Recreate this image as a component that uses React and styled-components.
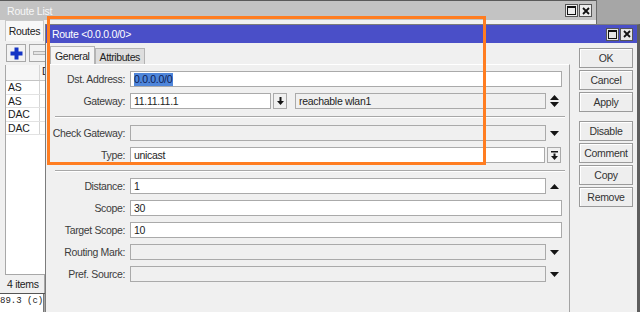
import React from 'react';
import styled, { createGlobalStyle } from 'styled-components';

const GlobalStyle = createGlobalStyle`
  html, body {
    margin: 0;
    padding: 0;
  }
  body {
    font-family: "Liberation Sans", Arial, sans-serif;
    font-size: 10px;
    letter-spacing: -0.2px;
    color: #2e2e2e;
    background: #a6a6a6;
  }
`;

const Desktop = styled.div`
  position: relative;
  width: 640px;
  height: 312px;
  overflow: hidden;
  background: #a6a6a6;
`;

/* ---------- Route List window (behind) ---------- */

const ListWindow = styled.div`
  position: absolute;
  left: 0;
  top: 0;
  width: 597px;
  height: 294px;
  box-sizing: border-box;
  background: #f0f0f0;
  border-right: 1px solid #6b6b6b;
  border-bottom: 1px solid #555;
  display: flex;
  flex-direction: column;
`;

const ListTitle = styled.div`
  height: 20px;
  flex: 0 0 20px;
  box-sizing: border-box;
  border-top: 1px solid #5a5a5a;
  background: #c3c3c3;
  color: #f7f7f7;
  font-size: 10.5px;
  display: flex;
  align-items: center;
  justify-content: space-between;
  padding: 0 4px 0 7px;
`;

const WinButtons = styled.div`
  display: flex;
  gap: 1px;
`;

const WinButton = styled.div`
  width: 13px;
  height: 13px;
  box-sizing: border-box;
  background: ${(p) => (p.$active ? '#e6e6e6' : '#ececec')};
  border: 1px solid #555;
  display: flex;
  align-items: center;
  justify-content: center;
`;

const ListBody = styled.div`
  flex: 1;
  display: flex;
  flex-direction: column;
  padding-left: 5px;
`;

const ListTabs = styled.div`
  display: flex;
  height: 21px;
`;

const ListTab = styled.div`
  width: 39px;
  box-sizing: border-box;
  background: #f8f8f8;
  border: 1px solid #c8c8c8;
  border-bottom: none;
  display: flex;
  align-items: center;
  justify-content: center;
  font-size: 10.5px;
  letter-spacing: -0.3px;
  color: #222;
`;

const Toolbar = styled.div`
  display: flex;
  gap: 3px;
  padding: 3px 0 0 1px;
  height: 18px;
`;

const ToolButton = styled.div`
  width: 20px;
  height: 18px;
  box-sizing: border-box;
  border: 1px solid #a8a8a8;
  background: #f2f2f2;
  display: flex;
  align-items: center;
  justify-content: center;
`;

const Table = styled.div`
  margin-top: 3px;
  flex: 1;
  background: #fff;
  border-left: 1px solid #a8a8a8;
  display: flex;
  flex-direction: column;
`;

const HeaderRow = styled.div`
  display: grid;
  grid-template-columns: 34px 1fr;
  height: 15px;
  background: #f6f6f6;
  border-bottom: 1px solid #c4c4c4;
`;

const Row = styled.div`
  display: grid;
  grid-template-columns: 34px 1fr;
  height: 13.5px;
  box-sizing: border-box;
  border-bottom: 1px solid #e2e2e2;
`;

const Cell = styled.div`
  border-right: 1px solid #d6d6d6;
  padding-left: 2px;
  font-size: 10.5px;
  line-height: 12px;
  color: #1c1c1c;
  overflow: hidden;
  white-space: nowrap;
`;

const StatusBar = styled.div`
  height: 18px;
  border-top: 1px solid #a8a8a8;
  display: flex;
`;

const StatusCell = styled.div`
  width: 37px;
  padding-left: 2px;
  border-right: 1px solid #a8a8a8;
  display: flex;
  align-items: center;
  font-size: 10.5px;
  letter-spacing: -0.3px;
  color: #222;
`;

const Terminal = styled.div`
  position: absolute;
  left: 0;
  top: 294px;
  width: 44px;
  height: 18px;
  background: #fff;
  border-right: 1px solid #777;
  font-family: "Liberation Mono", "Courier New", monospace;
  font-size: 9px;
  letter-spacing: 0;
  color: #222;
  padding-top: 2px;
  box-sizing: border-box;
  white-space: pre;
  overflow: hidden;
`;

/* ---------- Route dialog ---------- */

const Dialog = styled.div`
  position: absolute;
  left: 45px;
  top: 24px;
  width: 595px;
  height: 300px;
  box-sizing: border-box;
  background: #f0f0f0;
  border-left: 1px solid #7c7c7c;
  border-top: 1px solid #7c7c7c;
  border-right: 3px solid #5e5e5e;
  display: flex;
  flex-direction: column;
`;

const DialogTitle = styled.div`
  height: 18px;
  flex: 0 0 18px;
  background: #4a4fc8;
  color: #fff;
  font-size: 10.5px;
  letter-spacing: -0.3px;
  display: flex;
  align-items: center;
  justify-content: space-between;
  padding: 0 4px 0 6px;
`;

const DialogBody = styled.div`
  flex: 1;
  display: flex;
`;

const FormPane = styled.div`
  width: 524px;
  flex: 0 0 524px;
  padding-top: 3px;
  display: flex;
  flex-direction: column;
`;

const Tabs = styled.div`
  display: flex;
  align-items: flex-end;
  height: 18px;
  padding-left: 4px;
`;

const Tab = styled.div`
  height: ${(p) => (p.$active ? '18px' : '16px')};
  box-sizing: border-box;
  padding: 0 4px;
  background: ${(p) => (p.$active ? '#f4f4f4' : '#dedede')};
  border: 1px solid #b4b4b4;
  border-bottom: none;
  display: flex;
  align-items: center;
  font-size: 10.5px;
  letter-spacing: -0.4px;
  color: #222;
`;

const TabPanel = styled.div`
  flex: 1;
  margin-left: 1px;
  border-top: 1px solid #fff;
  border-right: 1px solid #a4a4a4;
`;

const Group = styled.div`
  display: flex;
  flex-direction: column;
  gap: 6px;
  padding: ${(p) => p.$top}px 0 7px;
`;

const Separator = styled.div`
  height: 0;
  border-top: 1px solid #a8a8a8;
  border-bottom: 1px solid #fff;
  margin: 0 4px 0 8px;
`;

const FieldRow = styled.div`
  display: flex;
  align-items: center;
  height: 16px;
  padding-right: 7px;
`;

const Label = styled.div`
  width: 78px;
  flex: 0 0 78px;
  margin-right: 5px;
  text-align: right;
  white-space: nowrap;
  color: #3c3c3c;
  font-size: 10.5px;
  letter-spacing: -0.35px;
`;

const Field = styled.div`
  height: 16px;
  box-sizing: border-box;
  flex: ${(p) => (p.$width ? `0 0 ${p.$width}px` : '1')};
  margin-left: ${(p) => p.$gap || 0}px;
  border: 1px solid #aaaaaa;
  background: ${(p) => (p.$disabled ? '#f0f0f0' : '#fff')};
  padding-left: 3px;
  display: flex;
  align-items: center;
  font-size: 10.5px;
  letter-spacing: -0.3px;
  color: #1e1e1e;
  white-space: nowrap;
  overflow: hidden;
`;

const Selected = styled.span`
  background: #4f86da;
  color: #0d1d55;
  line-height: 13px;
  padding-right: 1px;
`;

const IconSlot = styled.div`
  width: 16px;
  flex: 0 0 16px;
  display: flex;
  align-items: center;
  justify-content: center;
`;

const SmallButton = styled.div`
  width: 14px;
  flex: 0 0 14px;
  height: 16px;
  box-sizing: border-box;
  margin-left: 2px;
  margin-right: ${(p) => p.$right || 0}px;
  border: 1px solid #aaaaaa;
  background: #f0f0f0;
  display: flex;
  align-items: center;
  justify-content: center;
`;

const ButtonColumn = styled.div`
  flex: 1;
  padding: 5px 0 0 9px;
  display: flex;
  flex-direction: column;
  gap: 2px;
`;

const ActionButton = styled.div`
  width: 54px;
  height: 20px;
  box-sizing: border-box;
  margin-top: ${(p) => p.$gapTop || 0}px;
  border: 1px solid #9a9a9a;
  box-shadow: inset 1px 1px 0 #fff;
  background: #eeeeee;
  display: flex;
  align-items: center;
  justify-content: center;
  font-size: 10.5px;
  letter-spacing: -0.3px;
  color: #333;
`;

const Annotation = styled.div`
  position: absolute;
  left: 47px;
  top: 16px;
  width: 439px;
  height: 149px;
  box-sizing: border-box;
  border: 3px solid #ff7d21;
  pointer-events: none;
`;

/* ---------- icons ---------- */

const TriDown = () => (
  <svg width="9" height="5" viewBox="0 0 9 5">
    <path d="M0 0h9L4.5 5z" fill="#151515" />
  </svg>
);

const TriUp = () => (
  <svg width="9" height="5" viewBox="0 0 9 5">
    <path d="M0 5h9L4.5 0z" fill="#151515" />
  </svg>
);

const UpDown = () => (
  <svg width="9" height="12" viewBox="0 0 9 12">
    <path d="M0 5h9L4.5 0zM0 7h9L4.5 12z" fill="#151515" />
  </svg>
);

const DownStem = () => (
  <svg width="7" height="8" viewBox="0 0 7 8">
    <path d="M2.5 0h2v4H7L3.5 8 0 4h2.5z" fill="#151515" />
  </svg>
);

const BarDown = () => (
  <svg width="7" height="9" viewBox="0 0 7 9">
    <rect x="0" y="0" width="7" height="1.5" fill="#151515" />
    <path d="M2.5 2.5h2v2.5H7L3.5 9 0 5h2.5z" fill="#151515" />
  </svg>
);

const MaxIcon = () => (
  <svg width="9" height="9" viewBox="0 0 9 9">
    <rect x="0.5" y="0.5" width="8" height="8" fill="none" stroke="#111" />
    <rect x="0" y="0" width="9" height="2" fill="#111" />
  </svg>
);

const CloseIcon = () => (
  <svg width="8" height="8" viewBox="0 0 8 8">
    <path d="M1 1l6 6M7 1L1 7" stroke="#111" strokeWidth="1.8" />
  </svg>
);

const PlusIcon = () => (
  <svg width="13" height="13" viewBox="0 0 13 13">
    <rect x="4.5" y="0.5" width="4" height="12" fill="#1535c5" />
    <rect x="0.5" y="4.5" width="12" height="4" fill="#1535c5" />
  </svg>
);

const MinusIcon = () => (
  <svg width="13" height="5" viewBox="0 0 13 5">
    <rect x="0.5" y="0.5" width="12" height="3" fill="#e4e4e4" stroke="#b4b4b4" />
  </svg>
);

const rows = ['AS', 'AS', 'DAC', 'DAC'];

export default function App() {
  return (
    <>
      <GlobalStyle />
      <Desktop>
        <ListWindow>
          <ListTitle>
            <span>Route List</span>
            <WinButtons>
              <WinButton><MaxIcon /></WinButton>
              <WinButton><CloseIcon /></WinButton>
            </WinButtons>
          </ListTitle>
          <ListBody>
            <ListTabs>
              <ListTab>Routes</ListTab>
            </ListTabs>
            <Toolbar>
              <ToolButton><PlusIcon /></ToolButton>
              <ToolButton><MinusIcon /></ToolButton>
            </Toolbar>
            <Table>
              <HeaderRow>
                <Cell />
                <Cell>D</Cell>
              </HeaderRow>
              {rows.map((r, i) => (
                <Row key={i}>
                  <Cell>{r}</Cell>
                  <Cell />
                </Row>
              ))}
            </Table>
            <StatusBar>
              <StatusCell>4 items</StatusCell>
            </StatusBar>
          </ListBody>
        </ListWindow>

        <Terminal>89.3 (c)</Terminal>

        <Dialog>
          <DialogTitle>
            <span>Route &lt;0.0.0.0/0&gt;</span>
            <WinButtons>
              <WinButton $active><MaxIcon /></WinButton>
              <WinButton $active><CloseIcon /></WinButton>
            </WinButtons>
          </DialogTitle>
          <DialogBody>
            <FormPane>
              <Tabs>
                <Tab $active>General</Tab>
                <Tab>Attributes</Tab>
              </Tabs>
              <TabPanel>
                <Group $top={6}>
                  <FieldRow>
                    <Label>Dst. Address:</Label>
                    <Field><Selected>0.0.0.0/0</Selected></Field>
                  </FieldRow>
                  <FieldRow>
                    <Label>Gateway:</Label>
                    <Field $width={141}>11.11.11.1</Field>
                    <SmallButton><DownStem /></SmallButton>
                    <Field $gap={8} $disabled>reachable wlan1</Field>
                    <IconSlot><UpDown /></IconSlot>
                  </FieldRow>
                </Group>
                <Separator />
                <Group $top={7}>
                  <FieldRow>
                    <Label>Check Gateway:</Label>
                    <Field $disabled />
                    <IconSlot><TriDown /></IconSlot>
                  </FieldRow>
                  <FieldRow>
                    <Label>Type:</Label>
                    <Field>unicast</Field>
                    <SmallButton $right={1}><BarDown /></SmallButton>
                  </FieldRow>
                </Group>
                <Separator />
                <Group $top={6}>
                  <FieldRow>
                    <Label>Distance:</Label>
                    <Field>1</Field>
                    <IconSlot><TriUp /></IconSlot>
                  </FieldRow>
                  <FieldRow>
                    <Label>Scope:</Label>
                    <Field>30</Field>
                  </FieldRow>
                  <FieldRow>
                    <Label>Target Scope:</Label>
                    <Field>10</Field>
                  </FieldRow>
                  <FieldRow>
                    <Label>Routing Mark:</Label>
                    <Field $disabled />
                    <IconSlot><TriDown /></IconSlot>
                  </FieldRow>
                  <FieldRow>
                    <Label>Pref. Source:</Label>
                    <Field $disabled />
                    <IconSlot><TriDown /></IconSlot>
                  </FieldRow>
                </Group>
              </TabPanel>
            </FormPane>
            <ButtonColumn>
              <ActionButton>OK</ActionButton>
              <ActionButton>Cancel</ActionButton>
              <ActionButton>Apply</ActionButton>
              <ActionButton $gapTop={7}>Disable</ActionButton>
              <ActionButton>Comment</ActionButton>
              <ActionButton>Copy</ActionButton>
              <ActionButton>Remove</ActionButton>
            </ButtonColumn>
          </DialogBody>
        </Dialog>

        <Annotation />
      </Desktop>
    </>
  );
}
